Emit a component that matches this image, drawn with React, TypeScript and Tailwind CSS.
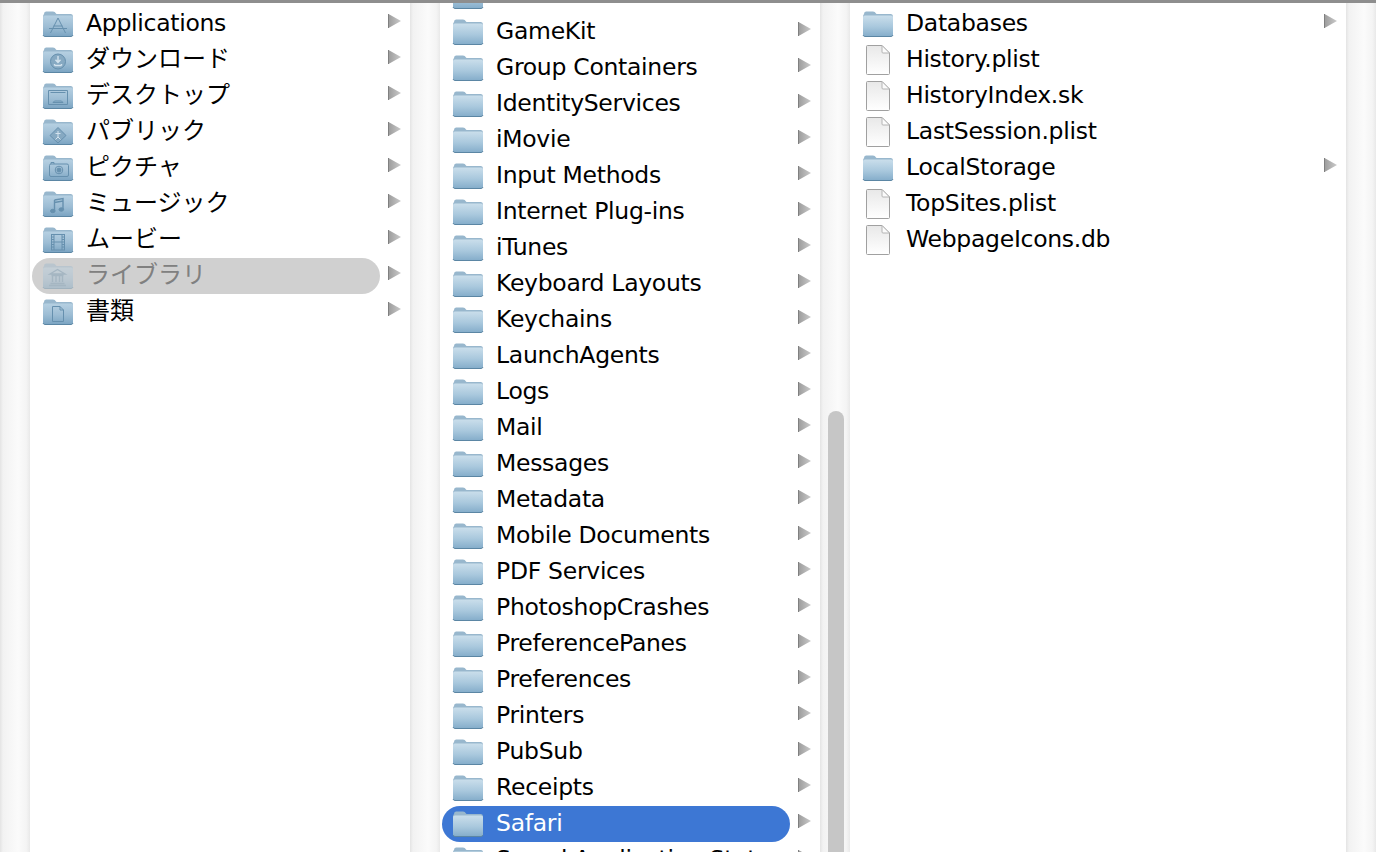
import React from "react";

type Glyph = "none" | "app" | "down" | "desk" | "pub" | "pic" | "music" | "movie" | "lib" | "doc";

function Folder({ glyph = "none", id, faded = false }: { glyph?: Glyph; id: string; faded?: boolean }) {
  const s = "#6690ae";
  const plain = glyph === "none";
  return (
    <svg width="32" height="26" viewBox="0 0 32 26" className={`shrink-0 ${faded ? "opacity-40" : ""}`}>
      <defs>
        <linearGradient id={id} x1="0" y1="0" x2="0" y2="1">
          <stop offset="0" stopColor={plain ? "#cadeeb" : "#b6d0e2"} />
          <stop offset="0.55" stopColor={plain ? "#a9c8dd" : "#9dbdd4"} />
          <stop offset="1" stopColor={plain ? "#86aecb" : "#7ca5c3"} />
        </linearGradient>
      </defs>
      <path d="M2 3 Q2 0.500 4 0.500 H11 Q13 0.500 14 2.500 L14.500 3 H29 Q31 3 31 5.500 V23 Q31 25 29.500 25 H2.500 Q1 25 1 23 V6 Q1 4 2 3 Z" fill="#98b7cd" />
      <path d="M1 6 Q1 4.500 3 4.500 H29 Q31 4.500 31 6 V23 Q31 25 29.500 25 H2.500 Q1 25 1 23 Z" fill={`url(#${id})`} />
      <path d="M1 24 Q1.500 25.500 3 25.500 H29 Q30.500 25.500 31 24" stroke="#5b86a4" strokeWidth="1" fill="none" />
      <g stroke={s} fill="none" strokeWidth="1">
        {glyph === "app" && (
          <path d="M16 7 L9.500 20 M16 7 L22.500 20 M11.500 15 H20.500 M7 17.500 H25 M9.500 20 L8.500 22 M22.500 20 L23.500 22" />
        )}
        {glyph === "down" && (
          <>
            <circle cx="16" cy="14.500" r="7.500" fill="#86a9c2" />
            <path d="M16 9 V15 M13.500 12.800 L16 15.500 L18.500 12.800 M12.500 18.500 H19.500 M12.500 17 V18.500 M19.500 17 V18.500" stroke="#d4e3ee" strokeWidth="1.400" />
          </>
        )}
        {glyph === "desk" && <path d="M6.500 7.500 H25.500 V21.500 H6.500 Z M8.500 9.500 H23.500 M11 19.500 H21 L19.500 18 H12.500 Z" />}
        {glyph === "pub" && (
          <>
            <path d="M16 8.500 L24 16.500 L16 24 L8 16.500 Z" fill="#86a9c2" />
            <path d="M16 12 V19 M13.500 14.500 H18.500 M13.500 20.500 L16 18 L18.500 20.500" stroke="#d4e3ee" />
          </>
        )}
        {glyph === "pic" && (
          <>
            <rect x="7.500" y="9" width="19" height="12.500" rx="1.500" />
            <circle cx="17" cy="15" r="3.800" />
            <circle cx="17" cy="15" r="2" fill={s} />
            <path d="M9 9 V7.500 H12 V9" />
          </>
        )}
        {glyph === "music" && (
          <>
            <path d="M12.500 9 L21 7.500 V18.500 M12.500 9 V20 M12.500 11.500 L21 10" strokeWidth="1.400" />
            <ellipse cx="10.800" cy="20" rx="2.300" ry="1.700" fill={s} />
            <ellipse cx="19.300" cy="18.500" rx="2.300" ry="1.700" fill={s} />
          </>
        )}
        {glyph === "movie" && (
          <>
            <rect x="9.500" y="7.500" width="13" height="15.500" />
            <path d="M12 7.500 V23 M20 7.500 V23 M12 15 H20 M9.500 10 H12 M9.500 12.500 H12 M9.500 15 H12 M9.500 17.500 H12 M9.500 20 H12 M20 10 H22.500 M20 12.500 H22.500 M20 15 H22.500 M20 17.500 H22.500 M20 20 H22.500" />
          </>
        )}
        {glyph === "lib" && (
          <path d="M8 11 L15.500 6.500 L23 11 Z M9.500 12.500 H21.500 M10.500 13 V19 M14 13 V19 M17.500 13 V19 M20.500 13 V19 M8.500 20.500 H22.500 M7 22.500 H24" strokeWidth="1.400" />
        )}
        {glyph === "doc" && <path d="M10.500 7.500 H18 L21.500 11 V22.500 H10.500 Z M18 7.500 V11 H21.500" />}
      </g>
    </svg>
  );
}

function FileIcon({ id }: { id: string }) {
  return (
    <svg width="26" height="32" viewBox="0 0 26 32" className="shrink-0">
      <defs>
        <linearGradient id={id} x1="0" y1="0" x2="0" y2="1">
          <stop offset="0" stopColor="#e8e8e8" />
          <stop offset="1" stopColor="#ffffff" />
        </linearGradient>
      </defs>
      <path d="M2.500 1.500 Q1.500 1.500 1.500 2.500 V29.500 Q1.500 30.500 2.500 30.500 H23.500 Q24.500 30.500 24.500 29.500 V9 L17 1.500 Z" fill={`url(#${id})`} stroke="#a0a0a0" />
      <path d="M17 1.500 V8 Q17 9 18 9 H24.500 Z" fill="#fbfbfb" stroke="#b4b4b4" />
    </svg>
  );
}

function Arrow({ id }: { id: string }) {
  return (
    <svg width="14" height="16" viewBox="0 0 14 16" className="shrink-0">
      <defs>
        <linearGradient id={id} x1="0" y1="0" x2="1" y2="0">
          <stop offset="0" stopColor="#9c9c9c" />
          <stop offset="1" stopColor="#cacaca" />
        </linearGradient>
      </defs>
      <path d="M0.500 1 L13 8 L0.500 15 Z" fill={`url(#${id})`} />
      <path d="M0.500 1 V15" stroke="#808080" />
    </svg>
  );
}

function Row({
  name,
  glyph = "none",
  file = false,
  arrow = true,
  state = "",
  id,
  arrowClass = "pl-[8px]",
  width = "w-[348px]",
}: {
  name: string;
  glyph?: Glyph;
  file?: boolean;
  arrow?: boolean;
  state?: "" | "gray" | "blue";
  id: string;
  arrowClass?: string;
  width?: string;
}) {
  const bg = state === "gray" ? "bg-[#d0d0d0]" : state === "blue" ? "bg-[#3d77d4]" : "";
  const text = state === "gray" ? "text-[#808080]" : state === "blue" ? "text-white" : "text-black";
  const cjk = /[^\x00-\x7f]/.test(name);
  const type = cjk ? "text-[24px]" : "text-[23.5px] tracking-[-0.29px]";
  return (
    <div className="flex h-[36px] shrink-0 items-center">
      <div className={`flex h-[36px] ${width} items-center rounded-full ${bg}`}>
        <div className="flex w-[54px] shrink-0 items-center pl-[10px]">
          {file ? (
            <div className="pl-[3px]">
              <FileIcon id={id + "f"} />
            </div>
          ) : (
            <Folder glyph={glyph} id={id + "g"} faded={state === "gray"} />
          )}
        </div>
        <span className={`whitespace-nowrap pb-[2px] leading-[34px] ${type} ${text} [font-family:'DejaVu_Sans','Noto_Sans_CJK_JP',sans-serif]`}>
          {name}
        </span>
      </div>
      {arrow && (
        <div className={`${arrowClass} -mt-[6px] flex`}>
          <Arrow id={id + "a"} />
        </div>
      )}
    </div>
  );
}

const col1: { n: string; g: Glyph; s?: "gray" }[] = [
  { n: "Applications", g: "app" },
  { n: "ダウンロード", g: "down" },
  { n: "デスクトップ", g: "desk" },
  { n: "パブリック", g: "pub" },
  { n: "ピクチャ", g: "pic" },
  { n: "ミュージック", g: "music" },
  { n: "ムービー", g: "movie" },
  { n: "ライブラリ", g: "lib", s: "gray" },
  { n: "書類", g: "doc" },
];

const col2 = [
  "Fonts",
  "GameKit",
  "Group Containers",
  "IdentityServices",
  "iMovie",
  "Input Methods",
  "Internet Plug-ins",
  "iTunes",
  "Keyboard Layouts",
  "Keychains",
  "LaunchAgents",
  "Logs",
  "Mail",
  "Messages",
  "Metadata",
  "Mobile Documents",
  "PDF Services",
  "PhotoshopCrashes",
  "PreferencePanes",
  "Preferences",
  "Printers",
  "PubSub",
  "Receipts",
  "Safari",
  "Saved Application State",
];

const col3 = [
  { n: "Databases", f: false },
  { n: "History.plist", f: true },
  { n: "HistoryIndex.sk", f: true },
  { n: "LastSession.plist", f: true },
  { n: "LocalStorage", f: false },
  { n: "TopSites.plist", f: true },
  { n: "WebpageIcons.db", f: true },
];

function Gutter() {
  return (
    <div className="h-full w-[30px] shrink-0 bg-[linear-gradient(to_right,#e4e4e4,#f2f2f2_10%,#fbfbfb_60%,#f4f4f4_88%,#e9e9e9)]" />
  );
}

export default function App() {
  return (
    <div className="flex h-[852px] w-[1376px] flex-col overflow-hidden bg-white">
      <div className="h-[3px] shrink-0 bg-[#8e8e8e]" />
      <div className="flex min-h-0 flex-1">
        <Gutter />
        <div className="flex h-full w-[380px] shrink-0 flex-col overflow-hidden pl-[2px] pt-[3px]">
          {col1.map((r, i) => (
            <Row key={r.n} id={`a${i}`} name={r.n} glyph={r.g} state={r.s ?? ""} />
          ))}
        </div>
        <Gutter />
        <div className="flex h-full w-[380px] shrink-0 flex-col overflow-hidden pl-[2px]">
          <div className="-mt-[25px] flex flex-col">
            {col2.map((n, i) => (
              <Row key={n} id={`b${i}`} name={n} state={n === "Safari" ? "blue" : ""} />
            ))}
          </div>
        </div>
        <div className="flex h-full w-[30px] shrink-0 flex-col bg-[linear-gradient(to_right,#e4e4e4,#f2f2f2_10%,#fbfbfb_60%,#f4f4f4_88%,#e9e9e9)] pl-[8px] pr-[6px] pt-[408px]">
          <div className="w-full flex-1 rounded-t-full bg-[#c6c6c6]" />
        </div>
        <div className="flex h-full w-[496px] shrink-0 flex-col overflow-hidden pl-[2px] pt-[3px]">
          {col3.map((r, i) => (
            <Row key={r.n} id={`c${i}`} name={r.n} file={r.f} arrow={!r.f} width="w-[460px]" arrowClass="pl-[12px]" />
          ))}
        </div>
        <Gutter />
      </div>
    </div>
  );
}
